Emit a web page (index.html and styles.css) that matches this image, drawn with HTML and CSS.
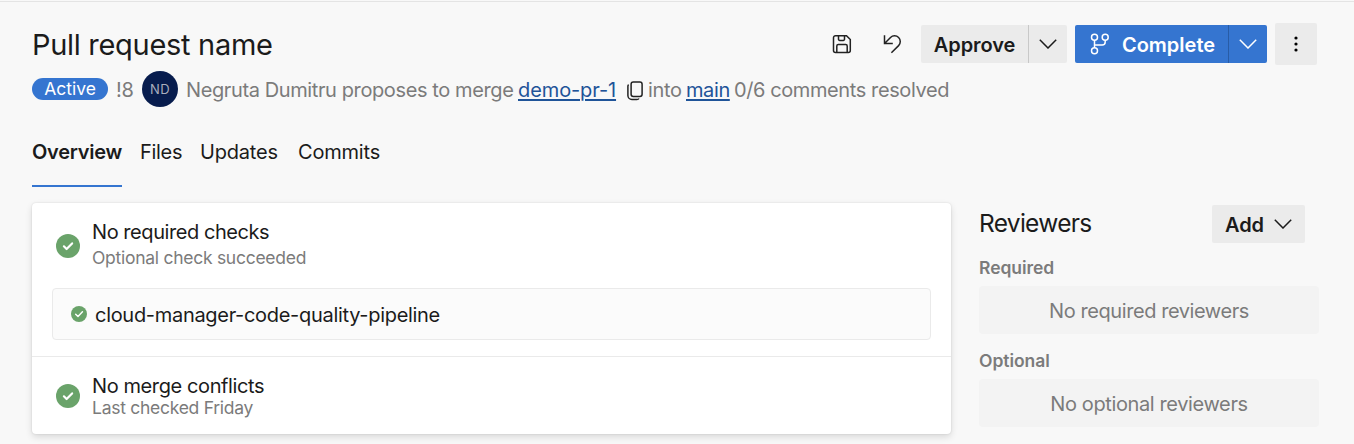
FILE: index.html
```html
<!DOCTYPE html>
<html lang="en">
<head>
<meta charset="utf-8">
<title>Pull request name</title>
<link rel="stylesheet" href="styles.css">
</head>
<body>
<div class="page">
  <header class="header">
    <h1 class="title">Pull request name</h1>
    <div class="actions">
      <svg class="icon save" viewBox="0 0 20 20" width="20" height="20"><path d="M3.500 1.700h11l3.800 3.800v11a2 2 0 0 1-2 2h-12.800a2 2 0 0 1-2-2v-12.800a2 2 0 0 1 2-2z"/><path d="M6.500 1.900v3.300a1.200 1.200 0 0 0 1.200 1.200h3.600a1.200 1.200 0 0 0 1.200-1.200v-3.300M4.800 18.300v-6.300a1.500 1.500 0 0 1 1.500-1.500h7.400a1.500 1.500 0 0 1 1.500 1.500v6.300"/></svg>
      <svg class="icon undo" viewBox="0 0 20 20" width="20" height="20"><path d="M1.500 1.200v8.300h8.300M1.800 9.200l5.700-5.700a5.700 5.700 0 0 1 8.100 8.100l-7.200 7.200"/></svg>
      <div class="split approve"><button class="main-btn">Approve</button><button class="drop"><svg class="chev" viewBox="0 0 18 10" width="18" height="10"><path d="M.8.8 9 9 17.200.8"/></svg></button></div>
      <div class="split complete"><button class="main-btn"><svg class="branch" viewBox="0 0 20 22" width="20" height="22"><circle cx="4.500" cy="4.300" r="3"/><circle cx="15.200" cy="4.300" r="3"/><circle cx="4.500" cy="17.700" r="3"/><path d="M4.500 7.300v7.400M15.200 7.300v1.700a3 3 0 0 1-3 3H4.500"/></svg><span>Complete</span></button><button class="drop"><svg class="chev" viewBox="0 0 18 10" width="18" height="10"><path d="M.8.8 9 9 17.200.8"/></svg></button></div>
      <button class="more"><svg viewBox="0 0 4 16" width="4" height="16"><circle cx="2" cy="2" r="1.600"/><circle cx="2" cy="8" r="1.600"/><circle cx="2" cy="14" r="1.600"/></svg></button>
    </div>
  </header>
  <div class="meta">
    <span class="pill">Active</span>
    <span class="pr-id">!8</span>
    <span class="avatar">ND</span>
    <span class="author">Negruta Dumitru proposes to merge</span>
    <a class="link source">demo-pr-1</a>
    <svg class="copy" viewBox="0 0 16 20" width="16" height="20"><rect x="4.100" y="1.100" width="11" height="14.400" rx="2.200"/><path d="M1.600 3.600C1 4 .9 4.600.9 5.300V14.500a4 4 0 0 0 4 4h5c1 0 1.700-.3 2.100-1"/></svg>
    <span class="into">into</span>
    <a class="link target">main</a>
    <span class="comments">0/6 comments resolved</span>
  </div>

  <nav class="tabs">
    <a class="tab active">Overview</a>
    <a class="tab files">Files</a>
    <a class="tab updates">Updates</a>
    <a class="tab commits">Commits</a>
  </nav>

  <main class="content">
    <section class="card">
      <div class="row checks">
        <svg class="status" viewBox="0 0 24 24" width="24" height="24"><circle cx="12" cy="12" r="12"/><path d="m7.900 12.300 2.700 2.700 5.500-5.600"/></svg>
        <div class="row-text">
          <div class="row-title t-checks">No required checks</div>
          <div class="row-sub s-checks">Optional check succeeded</div>
        </div>
      </div>
      <div class="pipeline">
        <svg class="status" viewBox="0 0 24 24" width="16" height="16"><circle cx="12" cy="12" r="12"/><path d="m7 12.300 3.500 3.400 6.700-7"/></svg>
        <span>cloud-manager-code-quality-pipeline</span>
      </div>
      <div class="row conflicts">
        <svg class="status" viewBox="0 0 24 24" width="24" height="24"><circle cx="12" cy="12" r="12"/><path d="m7.900 12.300 2.700 2.700 5.500-5.600"/></svg>
        <div>
          <div class="row-title t-conf">No merge conflicts</div>
          <div class="row-sub s-conf">Last checked Friday</div>
        </div>
      </div>
    </section>

    <aside class="reviewers">
      <div class="reviewers-head">
        <h2>Reviewers</h2>
        <button class="add"><span>Add</span><svg class="chev" viewBox="0 0 18 10" width="18" height="10"><path d="M.8.8 9 9 17.200.8"/></svg></button>
      </div>
      <h3 class="req">Required</h3>
      <div class="empty e-req">No required reviewers</div>
      <h3 class="opt">Optional</h3>
      <div class="empty e-opt">No optional reviewers</div>
    </aside>
  </main>
</div>
</body>
</html>
```
FILE: styles.css
```css
* { box-sizing: border-box; }
body {
  margin: 0;
  background: #f8f8f8;
  color: #1b1b1b;
  font-family: Inter, "Liberation Sans", sans-serif;
  font-size: 20px;
  line-height: 24px;
  white-space: nowrap;
}
.page { height: 444px; overflow: hidden; border-top: 1px solid #f8f8f8; box-shadow: inset 0 1px #e4e4e4; padding: 22px 35px 0 32px; }
h1, h2, h3 { margin: 0; font-weight: 400; }
svg { display: block; flex: none; }
button { border: 0; padding: 0; margin: 0; font: inherit; color: inherit; background: none; }

.header { display: flex; justify-content: space-between; height: 48px; margin-right: 2px; }
.title { font-size: 29px; line-height: 44px; letter-spacing: -0.3px; }
.meta { display: flex; align-items: center; height: 36px; margin-bottom: 26px; line-height: 26px; color: #7b7b7b; }
.meta > .pill { width: 76px; height: 22px; border-radius: 11px; background: #3575d0; color: #fff; font-size: 17.500px; line-height: 22px; text-align: center; }
.pr-id, .author, .link, .into, .comments { padding-top: 2px; }
.pr-id { width: 26px; margin-left: 8px; letter-spacing: -0.3px; }
.avatar { width: 36px; height: 36px; border-radius: 50%; background: #071c4d; color: #a9aebd; font-size: 13px; line-height: 36px; text-align: center; letter-spacing: 0.5px; }
.author { width: 332px; margin-left: 8px; letter-spacing: -0.390px; }
.link { color: #1f5499; text-decoration: underline; text-decoration-thickness: 2px; text-underline-offset: 2px; }
.source { letter-spacing: -0.1px; width: 98px; }
.copy { margin: 4px 5px 0 11px; fill: none; stroke: #222; stroke-width: 1.500; }
.into { width: 38px; letter-spacing: -0.3px; }
.target { width: 44px; letter-spacing: -0.4px; }
.comments { margin-left: 4px; letter-spacing: -0.4px; }

.actions { display: flex; align-items: center; height: 42px; }
.icon { fill: none; stroke: #222; stroke-width: 1.500; }
.save { margin-right: 31px; }
.undo { margin-right: 18px; }
.split { display: flex; height: 38px; border-radius: 2px; margin-right: 8px; background: #ebebeb; font-weight: 600; overflow: hidden; }
.main-btn { display: flex; align-items: center; justify-content: center; padding-top: 1px; }
.drop { width: 39px; border-left: 1px solid #c8c8c8; display: flex; align-items: center; justify-content: center; }
.chev { fill: none; stroke: currentColor; stroke-width: 1.500; }
.approve .main-btn { width: 107px; letter-spacing: -0.1px; }
.complete { background: #3575d0; color: #fff; }
.complete .main-btn { width: 153px; gap: 12px; padding-left: 2px; letter-spacing: 0; }
.complete .drop { border-color: #285ca6; }
.branch { fill: none; stroke: #fff; stroke-width: 1.500; margin-top: -2px; }
.more { width: 42px; height: 42px; border-radius: 2px; background: #ebebeb; display: flex; align-items: center; justify-content: center; }

.tabs { display: flex; height: 54px; }
.tab { line-height: 38px; height: 54px; letter-spacing: -0.2px; }
.active { width: 90px; font-weight: 600; letter-spacing: -0.250px; border-bottom: 2px solid #3575d0; }
.files { margin-left: 18px; width: 60px; letter-spacing: -0.3px; }
.updates { width: 98px; }

.content { display: flex; gap: 28px; margin-top: 16px; }
.card { width: 919px; flex: none; height: 231px; background: #fff; border-radius: 4px; box-shadow: 0 3px 7px rgba(0,0,0,.13), 0 0 2px rgba(0,0,0,.12); }
.row { display: flex; align-items: center; gap: 12px; padding-left: 24px; }
.checks { height: 85px; }
.checks .row-text { padding-bottom: 4px; }
.status { fill: #6aa36a; }
.status path { fill: none; stroke: #fff; stroke-width: 2.200; stroke-linecap: round; stroke-linejoin: round; }
.row-title { letter-spacing: -0.440px; }
.t-conf { letter-spacing: -0.4px; }
.row-sub { color: #7b7b7b; font-size: 17.500px; letter-spacing: -0.270px; }
.t-checks { line-height: 28px; }
.pipeline { display: flex; align-items: center; gap: 8px; height: 52px; margin: 0 20px 16px; padding-left: 18px; border: 1px solid #eaeaea; border-radius: 4px; background: #fbfbfb; letter-spacing: -0.3px; }
.pipeline span { padding-top: 2px; }
.conflicts { height: 78px; border-top: 1px solid #eaeaea; }
.row-sub.s-conf { line-height: 20px; }

.reviewers { width: 340px; flex: none; }
.reviewers-head { display: flex; justify-content: space-between; padding: 2px 14px 0 0; height: 40px; }
h2 { font-size: 24.500px; line-height: 37px; letter-spacing: -0.7px; }
.add { width: 93px; height: 38px; border-radius: 2px; background: #ebebeb; font-weight: 600; display: flex; align-items: center; justify-content: center; gap: 10px; }
.add span { padding-top: 1px; }
h3 { font-size: 17.500px; font-weight: 600; color: #7b7b7b; line-height: 24px; letter-spacing: -0.050px; }
.req { margin: 13px 0 6px; }
.opt { margin: 15px 0 6px; }
.empty { height: 48px; border-radius: 4px; background: #f3f3f3; color: #7b7b7b; text-align: center; line-height: 50px; letter-spacing: -0.430px; }
.e-opt { letter-spacing: -0.380px; }
```
